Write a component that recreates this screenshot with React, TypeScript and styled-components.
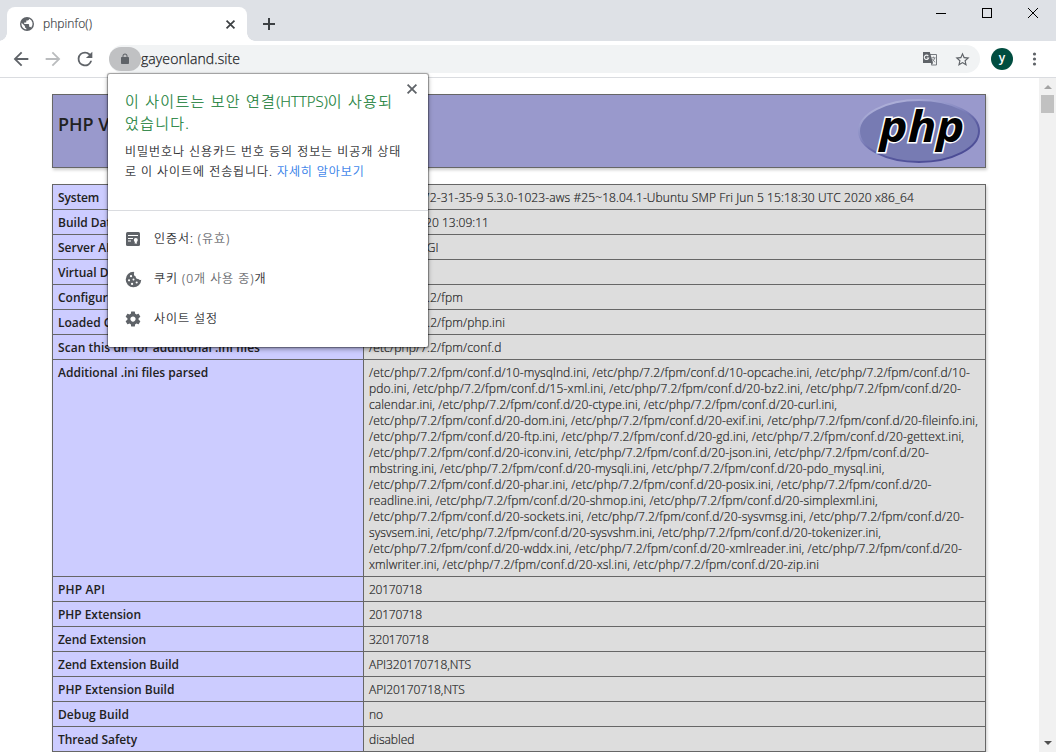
import React from "react";
import styled, { createGlobalStyle } from "styled-components";

const GlobalStyle = createGlobalStyle`
  * { box-sizing: border-box; }
  html, body { margin: 0; padding: 0; overflow: hidden; }
  body {
    background: #fff;
    color: #111;
    font-family: "Open Sans", "Noto Sans CJK KR", sans-serif;
    font-size: 12px;
    font-weight: 300;
  }
  svg { display: block; flex: none; overflow: visible; }
`;

const Browser = styled.div`
  position: relative;
  display: flex;
  flex-direction: column;
  width: 1056px;
  height: 752px;
  overflow: hidden;
`;

/* Tab strip */

const TabStrip = styled.header`
  display: flex;
  align-items: flex-end;
  height: 41px;
  padding-left: 7px;
  background: #dee1e6;
`;

const Tab = styled.div`
  position: relative;
  display: flex;
  align-items: center;
  width: 240px;
  height: 34px;
  padding: 0 12px 0 13px;
  background: #fff;
  border-radius: 8px 8px 0 0;

  &::before,
  &::after {
    content: "";
    position: absolute;
    bottom: 0;
    width: 8px;
    height: 8px;
  }
  &::before {
    left: -8px;
    background: radial-gradient(circle at 0 0, transparent 7.5px, #fff 8px);
  }
  &::after {
    right: -8px;
    background: radial-gradient(circle at 100% 0, transparent 7.5px, #fff 8px);
  }
`;

const TabTitle = styled.span`
  flex: 1;
  padding-left: 9px;
  color: #3c4043;
  line-height: 16px;
  letter-spacing: 0.07px;
  -webkit-text-stroke: 0.2px;
`;

const NewTab = styled.div`
  display: flex;
  align-items: center;
  height: 34px;
  padding-left: 16px;
`;

const WindowControls = styled.div`
  display: flex;
  align-self: flex-start;
  gap: 35px;
  margin-left: auto;
  padding: 8px 18px 0 0;
`;

/* Toolbar */

const Toolbar = styled.nav`
  display: flex;
  align-items: center;
  height: 37px;
  padding: 0 14px 0 10px;
  border-bottom: 1px solid #dadce0;
  background: #fff;
`;

const NavButtons = styled.div`
  display: flex;
  gap: 10px;
  width: 99px;
`;

const AddressBar = styled.div`
  display: flex;
  flex: none;
  align-items: center;
  width: 871px;
  height: 28px;
  padding-right: 9px;
  border-radius: 14px;
  background: #f1f3f4;
`;

const LockChip = styled.div`
  display: flex;
  align-items: center;
  justify-content: center;
  width: 32px;
  height: 24px;
  border-radius: 12px;
  background: #c0c1c3;
`;

const Url = styled.span`
  flex: 1;
  color: #202124;
  font-size: 14px;
  font-weight: 300;
  line-height: 20px;
  letter-spacing: 0.08px;
  -webkit-text-stroke: 0.25px;
`;

const AddressIcons = styled.div`
  display: flex;
  gap: 16px;
`;

const Avatar = styled.div`
  display: flex;
  align-items: center;
  justify-content: center;
  width: 22px;
  height: 22px;
  margin-left: 11px;
  padding-bottom: 2px;
  border-radius: 50%;
  background: #004d40;
  color: #fff;
  font-size: 12px;
  font-weight: 600;
  line-height: 16px;
`;

const MenuButton = styled.div`
  margin-left: auto;
`;

/* Page */

const Viewport = styled.div`
  display: flex;
  flex: 1;
  min-height: 0;
`;

const Page = styled.main`
  flex: 1;
  padding: 16px 53px 0 52px;
  overflow: hidden;
`;

const VersionBanner = styled.div`
  display: flex;
  align-items: flex-start;
  justify-content: space-between;
  height: 74px;
  margin-bottom: 16px;
  padding: 4px 5px;
  border: 1px solid #666;
  background: #9999cc;
  box-shadow: 1px 2px 3px #ccc;
`;

const VersionTitle = styled.h1`
  margin: 13px 0 0;
  color: #222;
  font-size: 18px;
  font-weight: 600;
  line-height: 25px;
`;

const InfoTable = styled.div`
  border: 1px solid #666;
  border-bottom: 0;
  box-shadow: 1px 2px 3px #ccc;
`;

const InfoRow = styled.div`
  display: grid;
  grid-template-columns: 311px 1fr;
  min-height: 25px;
  border-bottom: 1px solid #666;
  line-height: 16px;
  white-space: pre;
`;

const Key = styled.div<{ $spacing?: number }>`
  padding: 5px 5px 3px;
  border-right: 1px solid #666;
  background: #ccccff;
  color: #222;
  font-weight: 600;
  letter-spacing: ${(p) => p.$spacing ?? 0}px;
`;

const Value = styled.div`
  display: flex;
  flex-direction: column;
  padding: 5px 5px 3px;
  background: #ddd;
  color: #222;
  -webkit-text-stroke: 0.18px;
`;

const Line = styled.span<{ $spacing?: number }>`
  letter-spacing: ${(p) => p.$spacing ?? 0}px;
`;

/* Scrollbar */

const Scrollbar = styled.div`
  display: flex;
  flex-direction: column;
  align-items: center;
  width: 17px;
  padding: 7px 0 7px;
  background: #f1f1f1;
`;

const Thumb = styled.div`
  width: 13px;
  height: 18px;
  margin: 6px 0 auto;
  background: #c1c1c1;
`;

/* Site information bubble */

const Bubble = styled.section`
  position: absolute;
  top: 74px;
  left: 108px;
  width: 320px;
  height: 273px;
  border-radius: 2px;
  background: #fff;
  box-shadow: 0 0 1px 0.5px rgba(0, 0, 0, 0.35), 0 2px 5px rgba(0, 0, 0, 0.4);
  white-space: pre;
  -webkit-text-stroke: 0.2px;
`;

const BubbleClose = styled.div`
  position: absolute;
  top: 10px;
  right: 11px;
`;

const BubbleText = styled.div`
  height: 137px;
  padding: 16px 10px 0 17px;
  border-bottom: 1px solid #dadce0;
`;

const BubbleTitle = styled.h2`
  margin: 0 0 8px;
  color: #188038;
  font-size: 15px;
  font-weight: 300;
  line-height: 22px;
  letter-spacing: 1.27px;
`;

const Latin = styled.span`
  letter-spacing: 0;
`;

const BubbleBody = styled.p`
  margin: 0;
  color: #202124;
  line-height: 20px;
  letter-spacing: 0.95px;
`;

const LearnMore = styled.a`
  color: #1a73e8;
  letter-spacing: 0.9px;
`;

const SettingList = styled.div`
  display: flex;
  flex-direction: column;
  padding: 8px 17px;
`;

const SettingRow = styled.div`
  display: flex;
  align-items: center;
  gap: 13px;
  height: 40px;
  color: #202124;
  letter-spacing: 0.95px;
  line-height: 16px;
`;

const IconSlot = styled.div`
  display: flex;
  align-items: center;
  justify-content: center;
  width: 16px;
  height: 16px;
`;

const Muted = styled.span`
  color: #5f6368;
`;

const dir = "/etc/php/7.2/fpm/conf.d/";

type TextLine = [text: string, spacing: number];
type Entry = { name: string; spacing?: number; lines: TextLine[] };

const entries: Entry[] = [
  {
    name: "System",
    spacing: -0.16,
    lines: [["Linux ip-172-31-35-9 5.3.0-1023-aws #25~18.04.1-Ubuntu SMP Fri Jun 5 15:18:30 UTC 2020 x86_64", 0.11]],
  },
  { name: "Build Date", lines: [["May 26 2020 13:09:11", 0.02]] },
  { name: "Server API", lines: [["FPM/FastCGI", 0.078]] },
  { name: "Virtual Directory Support", lines: [["disabled", 0.012]] },
  { name: "Configuration File (php.ini) Path", lines: [["/etc/php/7.2/fpm", 0.128]] },
  { name: "Loaded Configuration File", lines: [["/etc/php/7.2/fpm/php.ini", 0.134]] },
  { name: "Scan this dir for additional .ini files", spacing: 0.045, lines: [["/etc/php/7.2/fpm/conf.d", 0.132]] },
  {
    name: "Additional .ini files parsed",
    lines: [
      [`${dir}10-mysqlnd.ini, ${dir}10-opcache.ini, ${dir}10-`, 0.132],
      [`pdo.ini, ${dir}15-xml.ini, ${dir}20-bz2.ini, ${dir}20-`, 0.142],
      [`calendar.ini, ${dir}20-ctype.ini, ${dir}20-curl.ini,`, 0.113],
      [`${dir}20-dom.ini, ${dir}20-exif.ini, ${dir}20-fileinfo.ini,`, 0.14],
      [`${dir}20-ftp.ini, ${dir}20-gd.ini, ${dir}20-gettext.ini,`, 0.146],
      [`${dir}20-iconv.ini, ${dir}20-json.ini, ${dir}20-`, 0.138],
      [`mbstring.ini, ${dir}20-mysqli.ini, ${dir}20-pdo_mysql.ini,`, 0.138],
      [`${dir}20-phar.ini, ${dir}20-posix.ini, ${dir}20-`, 0.13],
      [`readline.ini, ${dir}20-shmop.ini, ${dir}20-simplexml.ini,`, 0.112],
      [`${dir}20-sockets.ini, ${dir}20-sysvmsg.ini, ${dir}20-`, 0.136],
      [`sysvsem.ini, ${dir}20-sysvshm.ini, ${dir}20-tokenizer.ini,`, 0.098],
      [`${dir}20-wddx.ini, ${dir}20-xmlreader.ini, ${dir}20-`, 0.126],
      [`xmlwriter.ini, ${dir}20-xsl.ini, ${dir}20-zip.ini`, 0.118],
    ],
  },
  { name: "PHP API", spacing: 0.16, lines: [["20170718", -0.225]] },
  { name: "PHP Extension", spacing: -0.05, lines: [["20170718", -0.225]] },
  { name: "Zend Extension", spacing: -0.055, lines: [["320170718", -0.225]] },
  { name: "Zend Extension Build", spacing: -0.03, lines: [["API320170718,NTS", -0.061]] },
  { name: "PHP Extension Build", lines: [["API20170718,NTS", -0.02]] },
  { name: "Debug Build", spacing: 0.067, lines: [["no", 0]] },
  { name: "Thread Safety", spacing: -0.08, lines: [["disabled", 0.012]] },
];

const Icon = ({ d, size, color = "#5f6368" }: { d: string; size: number; color?: string }) => (
  <svg width={size} height={size} viewBox="0 0 24 24" fill={color}>
    <path d={d} />
  </svg>
);

const icons = {
  globe:
    "M12 0a12 12 0 1 0 0 24 12 12 0 0 0 0-24zm-1.2 21.5A9.6 9.6 0 0 1 2.700 9.900L8.400 15.600v1.200a2.400 2.400 0 0 0 2.400 2.400zm8.300-3a2.400 2.400 0 0 0-2.300-1.700h-1.200v-3.600a1.200 1.200 0 0 0-1.200-1.200H7.200V9.600h2.400a1.200 1.200 0 0 0 1.200-1.200V6h2.400a2.400 2.400 0 0 0 2.400-2.400v-.5a9.600 9.600 0 0 1 3.500 15.400z",
  back: "M20 11H7.830l5.590-5.590L12 4l-8 8 8 8 1.410-1.410L7.830 13H20v-2z",
  forward: "M12 4l-1.410 1.410L16.170 11H4v2h12.170l-5.580 5.590L12 20l8-8z",
  reload:
    "M17.650 6.350A7.958 7.958 0 0 0 12 4a8 8 0 1 0 7.730 10h-2.080A6 6 0 1 1 12 6c1.660 0 3.140.69 4.220 1.780L13 11h7V4l-2.350 2.350z",
  lock: "M18 8h-1V6c0-2.760-2.240-5-5-5S7 3.240 7 6v2H6c-1.100 0-2 .9-2 2v10c0 1.100.9 2 2 2h12c1.100 0 2-.9 2-2V10c0-1.100-.9-2-2-2zM8.900 8V6a3.100 3.100 0 0 1 6.200 0v2z",
  star: "M22 9.240l-7.190-.62L12 2 9.190 8.630 2 9.240l5.460 4.730L5.820 21 12 17.270 18.180 21l-1.630-7.030L22 9.240zM12 15.400l-3.760 2.270 1-4.280-3.320-2.880 4.380-.38L12 6.100l1.710 4.040 4.380.38-3.320 2.880 1 4.280L12 15.400z",
  cookie:
    "M12 1a11 11 0 1 0 11 11.500c-1.500.6-3.300.2-4.100-1.200-2.300.4-4-1.200-3.800-3.400-2.200-.6-3.300-3.400-2-5.700A5 5 0 0 0 12 1zM8.500 5.700a1.600 1.600 0 1 1 0 3.200 1.600 1.600 0 0 1 0-3.200zM5.700 11.700a1.500 1.500 0 1 1 0 3 1.500 1.500 0 0 1 0-3zM12 10.700a1.400 1.400 0 1 1 0 2.800 1.400 1.400 0 0 1 0-2.800zM10 16.700a1.600 1.600 0 1 1 0 3.200 1.600 1.600 0 0 1 0-3.200zM16.500 14.700a1.500 1.500 0 1 1 0 3 1.500 1.500 0 0 1 0-3z",
  gear: "M19.430 12.980c.04-.32.070-.64.070-.98s-.03-.66-.07-.98l2.110-1.650c.19-.15.24-.42.12-.64l-2-3.460c-.12-.22-.39-.3-.61-.22l-2.490 1c-.52-.4-1.080-.73-1.690-.98l-.38-2.650A.488.488 0 0 0 14 2h-4c-.25 0-.46.18-.49.42l-.38 2.650c-.61.25-1.170.59-1.690.98l-2.490-1c-.23-.09-.49 0-.61.22l-2 3.460c-.13.22-.07.49.12.64l2.110 1.650c-.04.32-.07.65-.07.98s.03.66.07.98l-2.110 1.650c-.19.15-.24.42-.12.64l2 3.460c.12.22.39.3.61.22l2.490-1c.52.4 1.080.73 1.690.98l.38 2.650c.03.24.24.42.49.42h4c.25 0 .46-.18.49-.42l.38-2.650c.61-.25 1.170-.59 1.690-.98l2.490 1c.23.09.49 0 .61-.22l2-3.460c.12-.22.07-.49-.12-.64l-2.110-1.650zM12 15.500c-1.930 0-3.500-1.570-3.500-3.500s1.570-3.500 3.500-3.500 3.500 1.570 3.500 3.500-1.570 3.500-3.500 3.500z",
};

const Cross = ({ size, color, weight }: { size: number; color: string; weight: number }) => (
  <svg width={size} height={size} viewBox="0 0 10 10" stroke={color} strokeWidth={weight} fill="none">
    <path d="M.6.6l8.800 8.800M9.400.6L.6 9.400" />
  </svg>
);

const CertificateIcon = () => (
  <svg width="16" height="16" viewBox="0 0 16 16">
    <rect x="1" y="1" width="14" height="14" rx="1.5" fill="#5f6368" />
    <path d="M3 4.500h10M3 7.500h5M3 10h3" stroke="#fff" strokeWidth="1" />
    <circle cx="10.800" cy="8.900" r="2" fill="#fff" />
    <path d="M9.800 9.500v3.500l1-.8 1 .8V9.500z" fill="#fff" />
  </svg>
);

const TranslateIcon = () => (
  <svg width="16" height="16" viewBox="0 0 16 16" fill="none">
    <path d="M8 3.500h6.500v10.500H9.500" stroke="#777b80" />
    <path d="M1 1h6.800l3.200 11H1z" fill="#5f6368" />
    <path d="M9 12h2l-1.500 2.500z" fill="#5f6368" />
    <path d="M6.300 5.100A2.200 2.200 0 1 0 6.600 7H4.600" stroke="#f1f3f4" strokeWidth="1.100" />
    <path d="M9.500 6.800h4M11.500 5.700v1M12.700 7c-.4 1.600-1.200 2.700-2.300 3.500M10.500 8c.5 1.200 1.300 2.300 2.700 3.200" stroke="#777b80" strokeWidth=".9" />
  </svg>
);

const PhpLogo = () => (
  <svg width="122" height="66" viewBox="0 0 122 66">
    <defs>
      <linearGradient id="rim" x1="0.200" y1="0" x2="0.800" y2="1">
        <stop offset="0" stopColor="#b4b6dc" />
        <stop offset="0.350" stopColor="#8a8dc4" />
        <stop offset="0.620" stopColor="#5a5ca0" />
        <stop offset="1" stopColor="#484893" />
      </linearGradient>
    </defs>
    <ellipse cx="61" cy="32" rx="60" ry="31" fill="#777bb3" stroke="url(#rim)" strokeWidth="2" />
    <text
      x="21.500"
      y="43"
      fontFamily="Open Sans, sans-serif"
      fontSize="43"
      fontWeight="700"
      fontStyle="italic"
      textLength="85"
      lengthAdjust="spacingAndGlyphs"
      fill="#000"
      stroke="#fff"
      strokeWidth="2.800"
      strokeLinejoin="miter"
      paintOrder="stroke"
    >
      php
    </text>
  </svg>
);

export default function App() {
  return (
    <Browser>
      <GlobalStyle />
      <TabStrip>
        <Tab>
          <Icon d={icons.globe} size={14} />
          <TabTitle>phpinfo()</TabTitle>
          <Cross size={9} color="#3c4043" weight={1.900} />
        </Tab>
        <NewTab>
          <svg width="12" height="12" viewBox="0 0 12 12" stroke="#3c4043" strokeWidth="2">
            <path d="M6 0v12M0 6h12" />
          </svg>
        </NewTab>
        <WindowControls>
          <svg width="12" height="11" viewBox="0 0 12 11" stroke="#000">
            <path d="M1 5.500h10" />
          </svg>
          <svg width="11" height="11" viewBox="0 0 11 11" stroke="#000" fill="none">
            <rect x=".5" y=".5" width="9" height="9" />
          </svg>
          <svg width="10" height="10" viewBox="0 0 10 10" stroke="#000">
            <path d="M0 0l10 10M10 0L0 10" />
          </svg>
        </WindowControls>
      </TabStrip>

      <Toolbar>
        <NavButtons>
          <Icon d={icons.back} size={22} />
          <Icon d={icons.forward} size={22} color="#babcbe" />
          <Icon d={icons.reload} size={22} />
        </NavButtons>
        <AddressBar>
          <LockChip>
            <Icon d={icons.lock} size={12} />
          </LockChip>
          <Url>gayeonland.site</Url>
          <AddressIcons>
            <TranslateIcon />
            <Icon d={icons.star} size={17} />
          </AddressIcons>
        </AddressBar>
        <Avatar>y</Avatar>
        <MenuButton>
          <svg width="15" height="14" viewBox="0 0 15 14" fill="#5f6368">
            <circle cx="7.500" cy="2" r="1.600" />
            <circle cx="7.500" cy="7" r="1.600" />
            <circle cx="7.500" cy="12" r="1.600" />
          </svg>
        </MenuButton>
      </Toolbar>

      <Viewport>
        <Page>
          <VersionBanner>
            <VersionTitle>PHP Version 7.2.31</VersionTitle>
            <PhpLogo />
          </VersionBanner>
          <InfoTable>
            {entries.map((entry) => (
              <InfoRow key={entry.name}>
                <Key $spacing={entry.spacing}>{entry.name}</Key>
                <Value>
                  {entry.lines.map(([text, spacing]) => (
                    <Line key={text} $spacing={spacing}>
                      {text}
                    </Line>
                  ))}
                </Value>
              </InfoRow>
            ))}
          </InfoTable>
        </Page>
        <Scrollbar>
          <svg width="8" height="4" viewBox="0 0 8 4" fill="#a3a3a3">
            <path d="M4 0l4 4H0z" />
          </svg>
          <Thumb />
          <svg width="8" height="4" viewBox="0 0 8 4" fill="#505050">
            <path d="M0 0h8L4 4z" />
          </svg>
        </Scrollbar>
      </Viewport>

      <Bubble>
        <BubbleClose>
          <Cross size={10} color="#5f6368" weight={1.800} />
        </BubbleClose>
        <BubbleText>
          <BubbleTitle>
            이 사이트는 보안 연결<Latin>(HTTPS)</Latin>이 사용되
            <br />
            었습니다.
          </BubbleTitle>
          <BubbleBody>
            비밀번호나 신용카드 번호 등의 정보는 비공개 상태
            <br />
            로 이 사이트에 전송됩니다. <LearnMore>자세히 알아보기</LearnMore>
          </BubbleBody>
        </BubbleText>
        <SettingList>
          <SettingRow>
            <IconSlot>
              <CertificateIcon />
            </IconSlot>
            <span>
              인증서: <Muted>(유효)</Muted>
            </span>
          </SettingRow>
          <SettingRow>
            <IconSlot>
              <Icon d={icons.cookie} size={17} />
            </IconSlot>
            <span>
              쿠키 <Muted>(0개 사용 중)</Muted>개
            </span>
          </SettingRow>
          <SettingRow>
            <IconSlot>
              <Icon d={icons.gear} size={18} />
            </IconSlot>
            <span>사이트 설정</span>
          </SettingRow>
        </SettingList>
      </Bubble>
    </Browser>
  );
}
